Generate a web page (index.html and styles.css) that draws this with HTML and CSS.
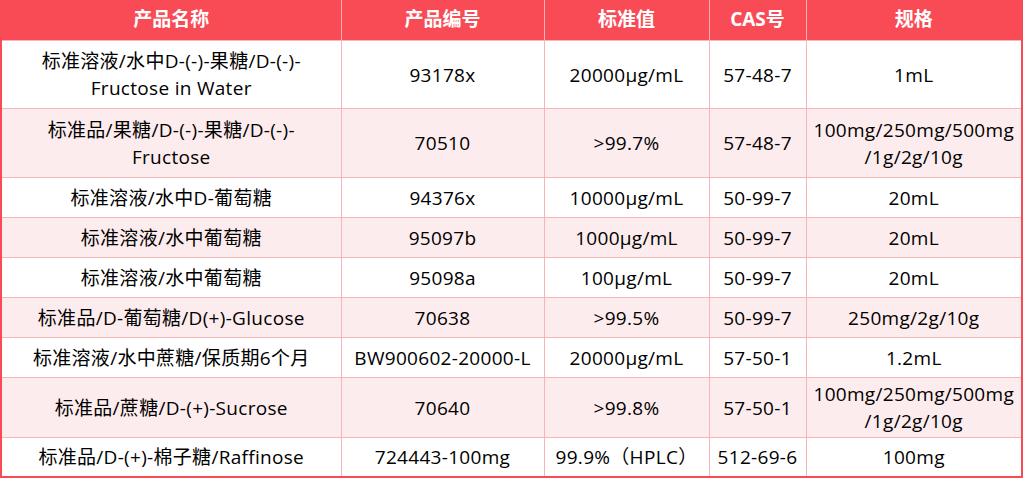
FILE: index.html
```html
<!DOCTYPE html>
<html lang="zh-CN">
<head>
<meta charset="utf-8">
<title>产品列表</title>
<link rel="stylesheet" href="styles.css">
</head>
<body>
<table class="products">
  <colgroup>
    <col class="c-name">
    <col class="c-code">
    <col class="c-std">
    <col class="c-cas">
    <col class="c-spec">
  </colgroup>
  <thead>
    <tr class="head">
      <th>产品名称</th>
      <th>产品编号</th>
      <th>标准值</th>
      <th>CAS号</th>
      <th>规格</th>
    </tr>
  </thead>
  <tbody>
    <tr class="h68">
      <td>标准溶液/水中D-(-)-果糖/D-(-)-<br>Fructose in Water</td>
      <td>93178x</td>
      <td>20000μg/mL</td>
      <td>57-48-7</td>
      <td>1mL</td>
    </tr>
    <tr class="h69 alt">
      <td>标准品/果糖/D-(-)-果糖/D-(-)-<br>Fructose</td>
      <td>70510</td>
      <td>&gt;99.7%</td>
      <td>57-48-7</td>
      <td>100mg/250mg/500mg<br>/1g/2g/10g</td>
    </tr>
    <tr class="h40">
      <td>标准溶液/水中D-葡萄糖</td>
      <td>94376x</td>
      <td>10000μg/mL</td>
      <td>50-99-7</td>
      <td>20mL</td>
    </tr>
    <tr class="h40 alt">
      <td>标准溶液/水中葡萄糖</td>
      <td>95097b</td>
      <td>1000μg/mL</td>
      <td>50-99-7</td>
      <td>20mL</td>
    </tr>
    <tr class="h40">
      <td>标准溶液/水中葡萄糖</td>
      <td>95098a</td>
      <td>100μg/mL</td>
      <td>50-99-7</td>
      <td>20mL</td>
    </tr>
    <tr class="h40 alt">
      <td>标准品/D-葡萄糖/D(+)-Glucose</td>
      <td>70638</td>
      <td>&gt;99.5%</td>
      <td>50-99-7</td>
      <td>250mg/2g/10g</td>
    </tr>
    <tr class="h40">
      <td>标准溶液/水中蔗糖/保质期6个月</td>
      <td>BW900602-20000-L</td>
      <td>20000μg/mL</td>
      <td>57-50-1</td>
      <td>1.2mL</td>
    </tr>
    <tr class="h60 alt">
      <td>标准品/蔗糖/D-(+)-Sucrose</td>
      <td>70640</td>
      <td>&gt;99.8%</td>
      <td>57-50-1</td>
      <td>100mg/250mg/500mg<br>/1g/2g/10g</td>
    </tr>
    <tr class="h40 last">
      <td>标准品/D-(+)-棉子糖/Raffinose</td>
      <td>724443-100mg</td>
      <td>99.9%（HPLC）</td>
      <td>512-69-6</td>
      <td>100mg</td>
    </tr>
  </tbody>
</table>
</body>
</html>
```

FILE: styles.css
```css
html, body {
  margin: 0;
  padding: 0;
  background: #ffffff;
}

.products {
  width: 1023px;
  table-layout: fixed;
  border-collapse: collapse;
  font-family: "Open Sans", "Noto Sans CJK SC", sans-serif;
  font-size: 19px;
  letter-spacing: 0.3px;
  line-height: 27px;
  color: #000000;
  border-left: 2px solid #f94b56;
  border-right: 2px solid #f94b56;
  border-bottom: 2px solid #f94b56;
}

.c-name { width: 340px; }
.c-code { width: 203px; }
.c-std { width: 165px; }
.c-cas { width: 97px; }
.c-spec { width: 216px; }

.products th,
.products td {
  padding: 2px 2px 0;
  text-align: center;
  vertical-align: middle;
  box-sizing: border-box;
}

.products th {
  background: #f94b56;
  color: #ffffff;
  font-weight: 700;
  letter-spacing: 0;
  height: 40px;
  padding-top: 0;
  border-left: 1px solid #fbb1b5;
  border-right: 1px solid #fbb1b5;
}

.products td {
  border: 1px solid #f6b5b7;
}

.products tr.alt td {
  background: #fdeced;
}

.products tr.h40 td { height: 40px; }
.products tr.h60 td { height: 60px; }
.products tr.h68 td { height: 68px; }
.products tr.h69 td { height: 69px; }

.products tr.last td {
  border-bottom: 2px solid #f94b56;
}
```
